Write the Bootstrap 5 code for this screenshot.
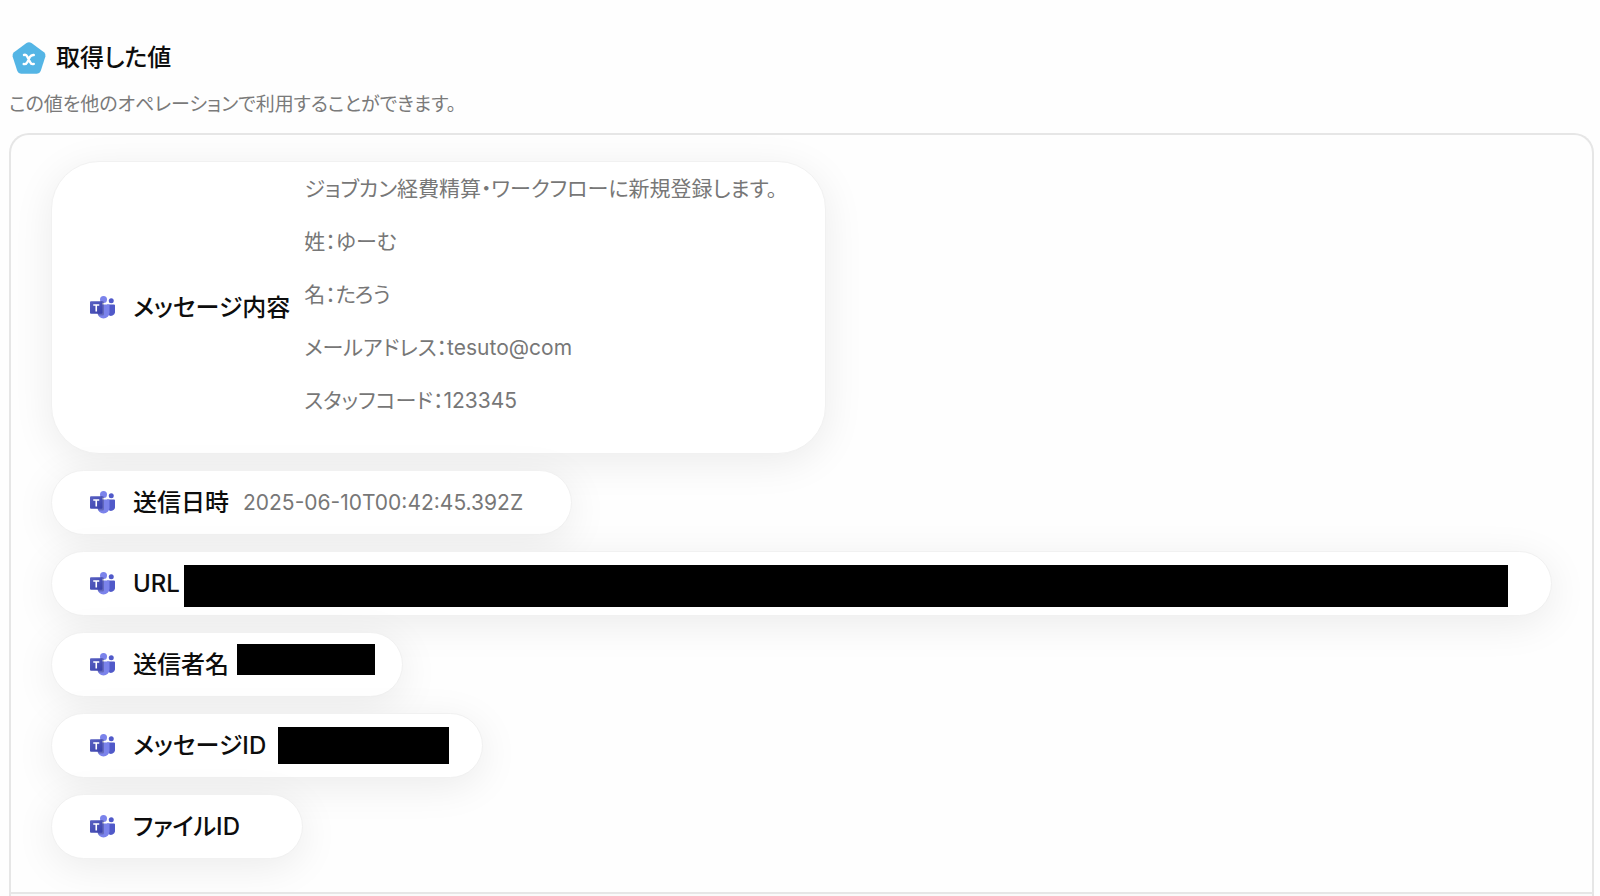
<!DOCTYPE html>
<html lang="ja">
<head>
<meta charset="utf-8">
<meta name="viewport" content="width=device-width, initial-scale=1">
<title>取得した値</title>
<link href="https://cdn.jsdelivr.net/npm/bootstrap@5.3.0/dist/css/bootstrap.min.css" rel="stylesheet">
<style>
  body {
    font-family: Inter, "Noto Sans CJK JP", sans-serif;
    font-feature-settings: "palt";
    background: #fefefe;
    color: #0d0d0d;
  }
  .page { padding: 40px 6px 0 9px; }
  .page-title { font-size: 24px; line-height: 36px; font-weight: 500; }
  .page-title span { margin-left: 11px; }
  .page-mark { overflow: visible; }
  .page-note { font-size: 19px; line-height: 28px; color: #7a7a7a; margin: 15px 0 14px; }
  .values-panel { border: 2px solid #e6e6e6; border-bottom: 0; border-radius: 20px 20px 0 0; }
  .values-list { padding: 26px 40px 33px 40px; gap: 16px; }
  .panel-foot { border-top: 2px solid #e6e6e6; background: #fafafa; }
  .value-pill {
    min-height: 65px;
    max-width: 100%;
    padding: 0 48px 0 38px;
    border: 1px solid #f1f1f1;
    border-radius: 48px;
    background: #fff;
    box-shadow: 0 8px 40px rgba(0, 0, 0, .08);
  }
  .value-name { font-size: 24px; line-height: 36px; font-weight: 500; margin-left: 18px; }
  .value-text { font-size: 21px; line-height: 26px; color: #777; margin-left: 14px; }
  .value-lines { padding: 14px 0 12px; }
  .value-lines p { margin: 0 0 27px; }
  .masked { background: #000; }
  .masked-url { height: 42px; margin: 5px -5px 0 4px; }
  .masked-sender { width: 138px; height: 31px; margin: 0 -21px 10px 8px; }
  .masked-id { width: 171px; height: 37px; margin: 0 -15px 0 12px; }
</style>
</head>
<body>
<svg width="0" height="0" class="position-absolute" aria-hidden="true">
  <defs>
    <linearGradient id="teamsTile" x1="0" y1="0" x2="1" y2="1">
      <stop offset="0" stop-color="#5a62c3"/><stop offset="1" stop-color="#3940ab"/>
    </linearGradient>
    <symbol id="teams" viewBox="0 0 50 46">
      <circle cx="42.500" cy="9.500" r="5" fill="#5059c9"/>
      <path fill="#5059c9" d="M34 17h14a2 2 0 0 1 2 2v12a8 8 0 0 1-14 6z"/>
      <circle cx="27" cy="7" r="7" fill="#7b83eb"/>
      <path fill="#7b83eb" d="M17 17h20a2 2 0 0 1 2 2v14a12 12 0 0 1-24 0V19a2 2 0 0 1 2-2z"/>
      <path fill="#000" opacity=".2" d="M15 17h13v19a3 3 0 0 1-3 3H17a12 12 0 0 1-2-6zM20 10h5a3 3 0 0 1 3 3v4H20z"/>
      <rect y="10.500" width="25" height="25" rx="2" fill="url(#teamsTile)"/>
      <path fill="#fff" d="M6.500 16.500h12v3h-4.400v11.500h-3.200V19.500H6.500z"/>
    </symbol>
  </defs>
</svg>

<main class="page d-flex flex-column min-vh-100">
  <header>
    <h1 class="page-title d-flex align-items-center mb-0">
      <svg class="page-mark flex-shrink-0 ms-1" width="32" height="36" viewBox="0 0 32 36" aria-hidden="true">
        <path d="M13.500 3.100Q16 1.300 18.500 3.100L31 12.200Q33.200 14 32.400 16.600L27.700 31Q26.700 33.700 23.900 33.700H8.100Q5.300 33.700 4.300 31L-.4 16.600Q-1.200 14 1 12.200Z" fill="#54b5e5"/>
        <path d="M11 15C12.600 14.500 13.600 15.100 14.300 16.700L17.200 22.300C17.900 23.900 19 24.500 20.800 23.900M20.800 15C18.800 14.700 17.800 15.400 16.700 17.200L14.600 21.800C13.700 23.700 12.400 24.400 10.700 24" fill="none" stroke="#fff" stroke-width="2.400" stroke-linecap="round"/>
      </svg>
      <span>取得した値</span>
    </h1>
    <p class="page-note">この値を他のオペレーションで利用することができます。</p>
  </header>

  <section class="values-panel flex-grow-1 d-flex flex-column">
    <ul class="values-list list-unstyled d-flex flex-column align-items-start mb-0">
      <li class="value-pill d-flex align-items-center">
        <svg class="flex-shrink-0" width="25" height="23"><use href="#teams"/></svg>
        <span class="value-name text-nowrap">メッセージ内容</span>
        <div class="value-text value-lines">
          <p>ジョブカン経費精算・ワークフローに新規登録します。</p>
          <p>姓：ゆーむ</p>
          <p>名：たろう</p>
          <p>メールアドレス：tesuto@com</p>
          <p>スタッフコード：123345</p>
        </div>
      </li>
      <li class="value-pill d-flex align-items-center">
        <svg class="flex-shrink-0" width="25" height="23"><use href="#teams"/></svg>
        <span class="value-name text-nowrap">送信日時</span>
        <span class="value-text">2025-06-10T00:42:45.392Z</span>
      </li>
      <li class="value-pill d-flex align-items-center w-100">
        <svg class="flex-shrink-0" width="25" height="23"><use href="#teams"/></svg>
        <span class="value-name text-nowrap">URL</span>
        <span class="masked masked-url flex-grow-1"></span>
      </li>
      <li class="value-pill d-flex align-items-center">
        <svg class="flex-shrink-0" width="25" height="23"><use href="#teams"/></svg>
        <span class="value-name text-nowrap">送信者名</span>
        <span class="masked masked-sender"></span>
      </li>
      <li class="value-pill d-flex align-items-center">
        <svg class="flex-shrink-0" width="25" height="23"><use href="#teams"/></svg>
        <span class="value-name text-nowrap">メッセージID</span>
        <span class="masked masked-id"></span>
      </li>
      <li class="value-pill d-flex align-items-center">
        <svg class="flex-shrink-0" width="25" height="23"><use href="#teams"/></svg>
        <span class="value-name text-nowrap">ファイルID</span>
        <span class="value-text"></span>
      </li>
    </ul>
    <div class="panel-foot flex-grow-1"></div>
  </section>
</main>
<script src="https://cdn.jsdelivr.net/npm/bootstrap@5.3.0/dist/js/bootstrap.bundle.min.js"></script>
</body>
</html>
